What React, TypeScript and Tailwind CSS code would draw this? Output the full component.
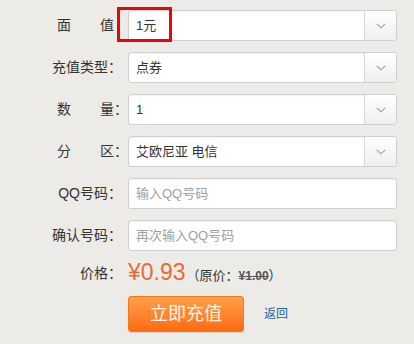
import React from 'react';

const font = { fontFamily: '"Liberation Sans", "Noto Sans CJK SC", sans-serif' };

function Chevron() {
  return (
    <svg width="10" height="6" viewBox="0 0 10 6" fill="none">
      <path d="M0.8 0.8L5 4.8L9.2 0.8" stroke="#9a9a9a" strokeWidth="1.1" />
    </svg>
  );
}

// 两字标签：两端对齐
function SpreadLabel({ a, b, colon = true }: { a: string; b: string; colon?: boolean }) {
  return (
    <div className="flex items-center justify-end">
      <div className="flex w-[57px] justify-between">
        <span>{a}</span>
        <span>{b}</span>
      </div>
      <span className={colon ? 'w-[8px]' : 'w-[8px] invisible'}>：</span>
    </div>
  );
}

function Label({ children }: { children: React.ReactNode }) {
  return (
    <div className="w-[122px] shrink-0 text-right text-[14px] text-[#333]">{children}</div>
  );
}

function SelectBox({ value }: { value: string }) {
  return (
    <div className="flex h-[31px] w-[269px] overflow-hidden rounded-[3px] border border-[#cfcfcf] bg-white shadow-[inset_0_1px_2px_rgba(0,0,0,0.06)]">
      <div className="flex flex-1 items-center pl-[7px] text-[13px] text-[#333]">{value}</div>
      <div className="flex w-[32px] items-center justify-center border-l border-[#d6d6d6] bg-gradient-to-b from-white to-[#efefef]">
        <Chevron />
      </div>
    </div>
  );
}

function TextBox({ placeholder }: { placeholder: string }) {
  return (
    <div className="flex h-[31px] w-[269px] items-center rounded-[3px] border border-[#cfcfcf] bg-white pl-[7px] text-[13px] text-[#a0a0a0] shadow-[inset_0_1px_2px_rgba(0,0,0,0.06)]">
      {placeholder}
    </div>
  );
}

function Row({ label, children }: { label: React.ReactNode; children: React.ReactNode }) {
  return (
    <div className="flex h-[31px] items-center gap-[6px]">
      <Label>{label}</Label>
      {children}
    </div>
  );
}

export default function App() {
  return (
    <div className="relative h-[344px] w-[414px] bg-[#ecebe8] pt-[10px]" style={font}>
      <div className="flex flex-col gap-[11px]">
        <Row label={<SpreadLabel a="面" b="值" colon={false} />}>
          <SelectBox value="1元" />
        </Row>
        <Row label="充值类型：">
          <SelectBox value="点券" />
        </Row>
        <Row label={<SpreadLabel a="数" b="量" />}>
          <SelectBox value="1" />
        </Row>
        <Row label={<SpreadLabel a="分" b="区" />}>
          <SelectBox value="艾欧尼亚 电信" />
        </Row>
        <Row label="QQ号码：">
          <TextBox placeholder="输入QQ号码" />
        </Row>
        <Row label="确认号码：">
          <TextBox placeholder="再次输入QQ号码" />
        </Row>
      </div>

      {/* 价格 */}
      <div className="mt-[7px] flex h-[30px] items-center gap-[6px]">
        <Label>价格：</Label>
        <div className="flex items-baseline">
          <span className="text-[23px] leading-none text-[#ec6a37]">¥0.93</span>
          <span className="ml-[1px] text-[13px] text-[#333]">（原价：</span>
          <span className="text-[12px] font-bold text-[#555] line-through">¥1.00</span>
          <span className="text-[13px] text-[#333]">）</span>
        </div>
      </div>

      <div className="mt-[8px] flex items-center pl-[128px]">
        <button className="flex h-[36px] w-[116px] items-center justify-center rounded-[3px] border border-[#f07a1a] bg-gradient-to-b from-[#ffa04a] to-[#ff6a08] text-[18px] text-[#fff6ea] shadow-[0_1px_1px_rgba(0,0,0,0.1)]">
          立即充值
        </button>
        <a className="ml-[20px] text-[12px] text-[#1d5f9b]">返回</a>
      </div>

      {/* 红框标注 */}
      <div className="absolute left-[117px] top-[7px] h-[35px] w-[55px] border-[3px] border-[#e8050f]" />
    </div>
  );
}
